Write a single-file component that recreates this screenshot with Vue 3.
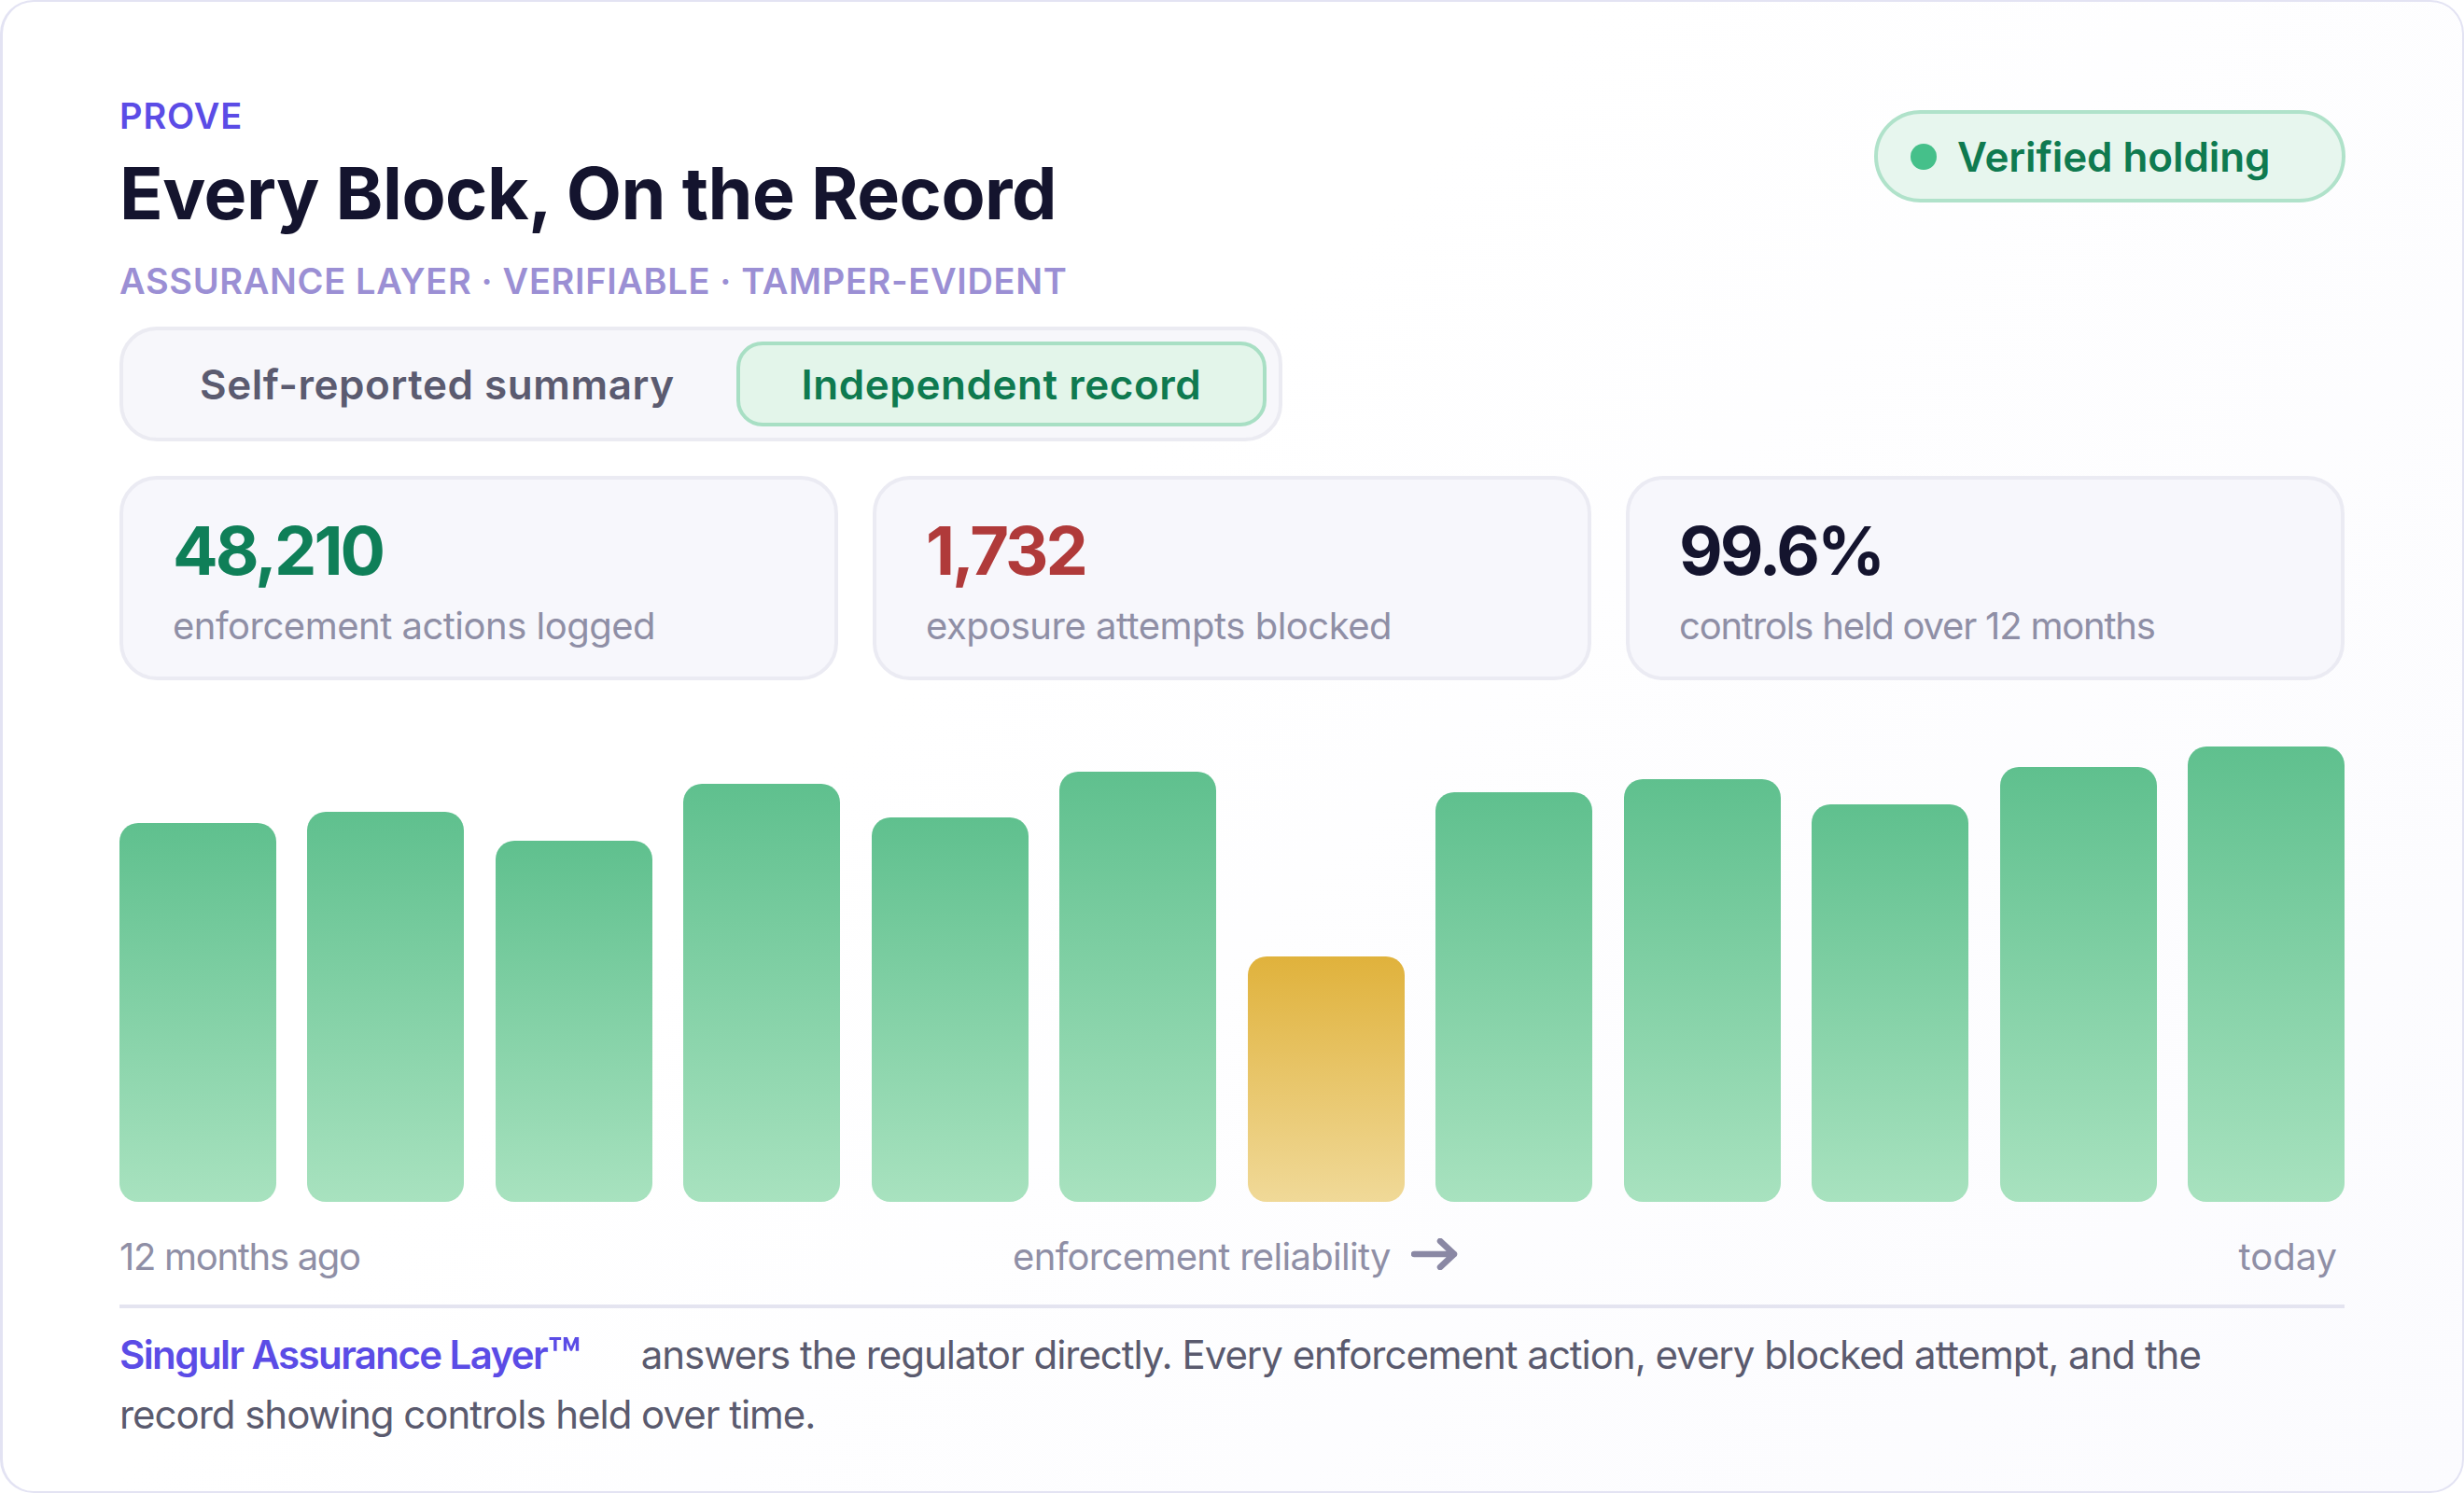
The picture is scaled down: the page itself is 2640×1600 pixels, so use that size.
<template>
  <div class="panel">
    <header class="head">
      <div class="titles">
        <div class="eyebrow">PROVE</div>
        <h1 class="title">Every Block, On the Record</h1>
        <div class="subtitle">ASSURANCE LAYER · VERIFIABLE · TAMPER-EVIDENT</div>
      </div>
      <div class="status">
        <span class="status-dot"></span>
        <span>Verified holding</span>
      </div>
    </header>

    <div class="toggle">
      <button
        v-for="tab in tabs"
        :key="tab.id"
        :class="['toggle-btn', { active: tab.id === activeTab }]"
        @click="activeTab = tab.id"
      >
        {{ tab.label }}
      </button>
    </div>

    <section class="stats">
      <div v-for="stat in stats" :key="stat.label" class="stat">
        <div :class="['stat-value', stat.tone]">{{ stat.value }}</div>
        <div class="stat-label">{{ stat.label }}</div>
      </div>
    </section>

    <section class="bars">
      <div
        v-for="(bar, i) in bars"
        :key="i"
        :class="['bar', { warn: bar.warn }]"
        :style="{ height: bar.h + 'px' }"
      ></div>
    </section>

    <div class="axis">
      <span class="axis-start">12 months ago</span>
      <span class="axis-mid">
        enforcement reliability
        <svg class="arrow" viewBox="0 0 50 34" fill="none">
          <path d="M3 17H46M31 3L46 17L31 31" stroke="currentColor" stroke-width="6.5" stroke-linecap="round" stroke-linejoin="round" />
        </svg>
      </span>
      <span class="axis-end">today</span>
    </div>

    <p class="foot">
      <strong>Singulr Assurance Layer<span class="tm">™</span></strong><span>answers the regulator directly. Every enforcement action, every blocked attempt, and the</span><br />
      <span>record showing controls held over time.</span>
    </p>
  </div>
</template>

<script setup>
import { ref } from 'vue'

const tabs = [
  { id: 'self', label: 'Self-reported summary' },
  { id: 'independent', label: 'Independent record' }
]
const activeTab = ref('independent')

const stats = [
  { value: '48,210', label: 'enforcement actions logged', tone: 'green' },
  { value: '1,732', label: 'exposure attempts blocked', tone: 'red' },
  { value: '99.6%', label: 'controls held over 12 months', tone: 'dark' }
]

const bars = [
  { h: 406 }, { h: 418 }, { h: 387 }, { h: 448 }, { h: 412 }, { h: 461 },
  { h: 263, warn: true },
  { h: 439 }, { h: 453 }, { h: 426 }, { h: 466 }, { h: 488 }
]
</script>

<style>
html, body {
  background: #fff;
}
</style>

<style scoped>
.panel {
  box-sizing: border-box;
  width: 2640px;
  height: 1600px;
  padding: 98px 126px 0 125px;
  border: 2px solid #e3e3f3;
  border-left-width: 3px;
  border-radius: 36px;
  background: linear-gradient(135deg, #ffffff 40%, #fbfbfe 100%);
  font-family: Inter, "Liberation Sans", sans-serif;
  overflow: hidden;
}

.head {
  display: flex;
  justify-content: space-between;
  align-items: flex-start;
}

.eyebrow {
  font-size: 38px;
  line-height: 48px;
  font-weight: 600;
  color: #5b4ce6;
  letter-spacing: 0.9px;
}

.title {
  margin: 15px 0 0;
  font-size: 77px;
  line-height: 88px;
  font-weight: 700;
  color: #14142e;
  letter-spacing: -0.5px;
}

.subtitle {
  margin-top: 26px;
  font-size: 38px;
  line-height: 48px;
  font-weight: 600;
  color: #9b8fd4;
  letter-spacing: 0.65px;
}

.status {
  display: flex;
  align-items: center;
  gap: 22px;
  box-sizing: border-box;
  width: 505px;
  height: 99px;
  margin-top: 18px;
  margin-right: -1px;
  padding-left: 35px;
  border: 4px solid #b0e2ca;
  border-radius: 50px;
  background: #e7f6ee;
  color: #0f7a50;
  font-size: 44px;
  font-weight: 600;
  letter-spacing: -0.1px;
}

.status-dot {
  width: 28px;
  height: 28px;
  border-radius: 50%;
  background: #45c08a;
}

.toggle {
  display: inline-flex;
  box-sizing: border-box;
  height: 123px;
  margin-top: 25px;
  padding: 12px 13px;
  border: 4px solid #ebebf2;
  border-radius: 40px;
  background: #f7f7fb;
  vertical-align: top;
}

.toggle-btn {
  padding: 0 65px;
  border: 4px solid transparent;
  border-radius: 28px;
  background: none;
  color: #5b5b70;
  font: 600 44px Inter, "Liberation Sans", sans-serif;
  letter-spacing: 0.55px;
  cursor: pointer;
}

.toggle-btn:first-child {
  padding-right: 62px;
}

.toggle-btn.active {
  padding: 0 66px;
  border-color: #a8dfc4;
  background: #e3f5ea;
  color: #0f7a50;
}

.stats {
  display: grid;
  grid-template-columns: repeat(3, 1fr);
  gap: 37px;
  margin-top: 37px;
}

.stat {
  box-sizing: border-box;
  height: 219px;
  padding: 36px 53px 0;
  border: 4px solid #ebebf3;
  border-radius: 40px;
  background: #f7f7fc;
}

.stat-value {
  font-size: 72px;
  line-height: 80px;
  font-weight: 700;
  letter-spacing: -3px;
}
.stat-value.green { color: #0f7f58; }
.stat-value.red { color: #b03a3a; }
.stat-value.dark { color: #14142e; }

.stat-label {
  margin-top: 17px;
  font-size: 40px;
  line-height: 48px;
  color: #8f8fa6;
  letter-spacing: -0.5px;
}

.stat:last-child .stat-label {
  letter-spacing: -1.2px;
}

.bars {
  display: flex;
  align-items: flex-end;
  justify-content: space-between;
  height: 488px;
  margin-top: 71px;
}

.bar {
  width: 168px;
  border-radius: 20px;
  background: linear-gradient(180deg, #5fc08e 0%, #a8e2bf 100%);
}

.bar.warn {
  background: linear-gradient(180deg, #e0b23c 0%, #f0d998 100%);
}

.axis {
  display: grid;
  grid-template-columns: 1fr auto 1fr;
  align-items: center;
  margin-top: 35px;
  font-size: 40px;
  line-height: 48px;
  color: #8f8fa6;
  letter-spacing: -0.7px;
}

.axis-start {
  letter-spacing: -1.3px;
}

.axis-mid {
  display: inline-flex;
  align-items: center;
  gap: 22px;
  margin-left: 7px;
}

.axis-end {
  justify-self: end;
  padding-right: 8px;
  letter-spacing: 0;
}

.arrow {
  width: 50px;
  height: 34px;
  margin-top: -6px;
  color: #8a88a4;
}

.foot {
  margin: 27px 0 0;
  padding-top: 18px;
  border-top: 4px solid #e4e4f0;
  font-size: 42px;
  line-height: 64px;
  color: #5a5a6e;
  letter-spacing: -1.03px;
}

.foot strong {
  margin-right: 62px;
  font-weight: 600;
  color: #5b4ce6;
  letter-spacing: -1.6px;
}

.tm {
  font-size: 58px;
  line-height: 0;
  letter-spacing: 2px;
  vertical-align: -8px;
}
</style>
